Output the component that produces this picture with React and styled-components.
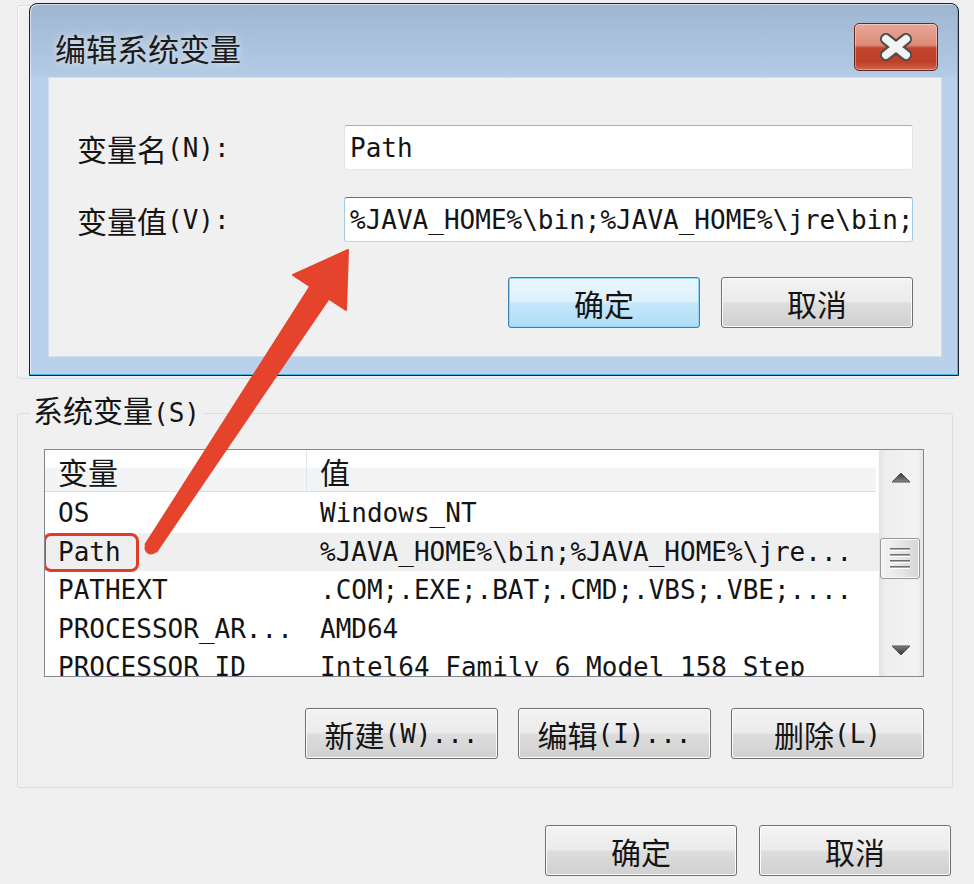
import React from "react";
import styled, { createGlobalStyle } from "styled-components";

const GlobalStyle = createGlobalStyle`
  html, body {
    margin: 0;
    background: #f0f0f0;
  }
  body {
    font-family: "DejaVu Sans Mono", "Noto Sans CJK SC", monospace;
    color: #141414;
  }
  * {
    box-sizing: border-box;
  }
`;

const Page = styled.div`
  position: relative;
  width: 974px;
  height: 884px;
  overflow: hidden;
  padding: 5px 23px 0 17px;
  font-size: 26px;
  line-height: 1;
`;

const Han = styled.span`
  font-family: "Noto Sans CJK SC", sans-serif;
  font-size: 30px;
  line-height: 1;
`;

// CJK runs get the wider CJK font, the rest stays half-width mono
function Mixed({ text }) {
  return text.split(/([\u3400-\u9fff]+)/).map((part, i) => {
    if (!part) return null;
    if (/[\u3400-\u9fff]/.test(part)) return <Han key={i}>{part}</Han>;
    return <span key={i}>{part}</span>;
  });
}

/* ---------- window behind the dialog ---------- */

const Backdrop = styled.div`
  width: 938px;
  height: 374px;
  border: 1px solid #d6dde4;
  border-right: none;
  border-radius: 4px 0 0 4px;
  box-shadow: inset 1px 1px 0 #ffffff;
  padding-left: 11px;
`;

/* ---------- dialog ---------- */

const Dialog = styled.div`
  width: 930px;
  height: 373px;
  margin-top: -3px;
  display: flex;
  flex-direction: column;
  border: 1px solid #17222c;
  border-radius: 8px 8px 0 0;
  background: linear-gradient(#9fb6d0, #b3cbe5 72px, #b9d1ea 74px, #b9d1ea);
  box-shadow: inset -1px -1px 0 #4fb8e2, inset 1px 1px 0 rgba(255, 255, 255, 0.55);
`;

const TitleBar = styled.div`
  height: 73px;
  flex-shrink: 0;
  display: flex;
  align-items: center;
  justify-content: space-between;
  padding: 13px 20px 0 25px;
`;

const Title = styled.div`
  font-family: "Noto Sans CJK SC", sans-serif;
  font-size: 31px;
  color: #1b1b1b;
  text-shadow: 0 0 10px rgba(255, 255, 255, 0.75);
`;

const CloseButton = styled.div`
  width: 84px;
  height: 48px;
  display: flex;
  align-items: center;
  justify-content: center;
  border: 1px solid #5e2b27;
  border-radius: 5px;
  background: linear-gradient(#e9a797, #dc8c79 46%, #c3452d 52%, #be3f28 82%, #d0654a);
  box-shadow: inset 0 0 0 1px rgba(255, 255, 255, 0.35);
`;

const ClientFrame = styled.div`
  flex: 1;
  display: flex;
  padding: 0 16px 18px 18px;
`;

const Client = styled.div`
  flex: 1;
  background: #f0f0f0;
  border: 1px solid #d2deea;
  padding: 47px 28px 28px 28px;
  display: grid;
  grid-template-columns: 267px 1fr;
  grid-auto-rows: 45px;
  row-gap: 27px;
  align-items: center;
`;

const Label = styled.div`
  white-space: nowrap;
  display: flex;
  align-items: center;
`;

const Field = styled.div`
  height: 45px;
  background: #ffffff;
  border: 1px solid;
  border-color: ${(p) =>
    p.$focus ? "#3d7bad #a4c9e3 #b7d9ed #a4c9e3" : "#abadb3 #e2e3ea #e3e9ef #e2e3ea"};
  border-radius: 3px;
  padding-left: 5px;
  display: flex;
  align-items: center;
  overflow: hidden;
  white-space: nowrap;
`;

const DialogButtons = styled.div`
  grid-column: 1 / -1;
  justify-self: end;
  align-self: start;
  margin-top: 8px;
  display: flex;
  gap: 21px;
`;

const Button = styled.button`
  width: ${(p) => p.$w || 192}px;
  height: 51px;
  padding: 0;
  font: inherit;
  color: #141414;
  display: flex;
  align-items: center;
  justify-content: center;
  white-space: nowrap;
  border: 1px solid ${(p) => (p.$default ? "#3c7fb1" : "#707070")};
  border-radius: 3px;
  background: ${(p) =>
    p.$default
      ? "linear-gradient(#ecf7fd, #dcf1fc 48%, #c4e7fb 52%, #b0ddf5)"
      : "linear-gradient(#f3f3f3, #ebebeb 48%, #dddddd 52%, #d0d0d0)"};
  box-shadow: inset 0 0 0 1px ${(p) => (p.$default ? "#8fd6f7" : "#fcfcfc")};
`;

/* ---------- system variables group ---------- */

const Group = styled.fieldset`
  margin: 14px 0 0 0;
  width: 936px;
  min-width: 0;
  padding: 16px 28px 28px 12px;
  border: 1px solid #d5dfe5;
  border-radius: 3px;
`;

const Legend = styled.legend`
  padding: 0 3px;
  line-height: 40px;
`;

const ListBox = styled.div`
  margin-left: 14px;
  width: 880px;
  height: 228px;
  border: 1px solid #828790;
  background: #ffffff;
  display: flex;
`;

const ListBody = styled.div`
  flex: 1;
  overflow: hidden;
  display: flex;
  flex-direction: column;
`;

const HeaderRow = styled.div`
  height: 42px;
  flex-shrink: 0;
  display: flex;
  margin: 0 3px 2px 0;
  border-bottom: 1px solid #dcdfe3;
  background: linear-gradient(#ffffff 0, #ffffff 40%, #f3f4f6 46%, #f3f4f6 100%);
`;

const HeaderCell = styled.div`
  display: flex;
  align-items: center;
  padding-left: 13px;
  width: ${(p) => (p.$w ? `${p.$w}px` : "auto")};
  flex: ${(p) => (p.$w ? "none" : 1)};
  border-right: ${(p) => (p.$w ? "1px solid #e1e6ec" : "none")};
`;

const Row = styled.div`
  height: 38.5px;
  flex-shrink: 0;
  display: flex;
  align-items: center;
  background: ${(p) => (p.$sel ? "#efefef" : "transparent")};
`;

const NameCell = styled.div`
  position: relative;
  width: 262px;
  height: 100%;
  flex: none;
  padding-left: 13px;
  display: flex;
  align-items: center;
  white-space: nowrap;
`;

const ValueCell = styled.div`
  flex: 1;
  padding-left: 13px;
  white-space: nowrap;
`;

const Marker = styled.div`
  position: absolute;
  left: -2px;
  top: 0;
  width: 96px;
  height: 39px;
  border: 3px solid #e23b27;
  border-radius: 8px;
`;

const Scrollbar = styled.div`
  width: 44px;
  flex-shrink: 0;
  display: flex;
  flex-direction: column;
  background: linear-gradient(to right, #e2e2e2, #eeeeee 15%, #f3f3f3 85%, #e6e6e6);
`;

const ScrollArrow = styled.div`
  height: ${(p) => p.$h}px;
  flex-shrink: 0;
  display: flex;
  align-items: center;
  justify-content: center;
`;

const Track = styled.div`
  flex: 1;
`;

const Thumb = styled.div`
  margin: 33px 3px 0 1px;
  height: 41px;
  border: 1px solid #979797;
  border-radius: 3px;
  background: linear-gradient(to right, #f4f4f4, #e6e6e6 50%, #d6d6d6);
  box-shadow: inset 0 0 0 1px #fbfbfb;
  display: flex;
  align-items: center;
  justify-content: center;
`;

const Grip = styled.div`
  width: 20px;
  height: 21px;
  background: repeating-linear-gradient(
    #6f6f6f 0 1px,
    #a9a9a9 1px 2px,
    #ffffff 2px 3px,
    transparent 3px 6px
  );
`;

const GroupButtons = styled.div`
  margin: 31px 0 0 14px;
  display: flex;
  justify-content: flex-end;
  gap: 20px;
`;

const Footer = styled.div`
  margin-top: 37px;
  display: flex;
  justify-content: flex-end;
  gap: 22px;
`;

const Overlay = styled.svg`
  position: absolute;
  left: 0;
  top: 0;
  pointer-events: none;
`;

const rows = [
  ["OS", "Windows_NT"],
  ["Path", "%JAVA_HOME%\\bin;%JAVA_HOME%\\jre..."],
  ["PATHEXT", ".COM;.EXE;.BAT;.CMD;.VBS;.VBE;...."],
  ["PROCESSOR_AR...", "AMD64"],
  ["PROCESSOR_ID", "Intel64 Family 6 Model 158 Step"],
];

function Arrow({ down }) {
  return (
    <svg width="20" height="11" viewBox="0 0 20 11">
      <defs>
        <linearGradient id={down ? "ad" : "au"} x1="0" y1="0" x2="0" y2="1">
          <stop offset="0" stopColor={down ? "#7d7d7d" : "#303030"} />
          <stop offset="1" stopColor={down ? "#303030" : "#8a8a8a"} />
        </linearGradient>
      </defs>
      <polygon
        points={down ? "1,1 19,1 10,10" : "1,10 19,10 10,1"}
        fill={`url(#${down ? "ad" : "au"})`}
        stroke="#555"
        strokeWidth="1"
        strokeLinejoin="round"
      />
    </svg>
  );
}

export default function App() {
  return (
    <>
      <GlobalStyle />
      <Page>
        <Backdrop>
          <Dialog>
            <TitleBar>
              <Title>编辑系统变量</Title>
              <CloseButton>
                <svg width="36" height="30" viewBox="0 0 36 30">
                  <path d="M8 7 L28 23 M28 7 L8 23" stroke="#4d4d4d" strokeWidth="12" strokeLinecap="round" />
                  <path d="M8 7 L28 23 M28 7 L8 23" stroke="#f4f4f4" strokeWidth="8" strokeLinecap="round" />
                </svg>
              </CloseButton>
            </TitleBar>
            <ClientFrame>
              <Client>
                <Label>
                  <Mixed text="变量名(N):" />
                </Label>
                <Field>Path</Field>
                <Label>
                  <Mixed text="变量值(V):" />
                </Label>
                <Field $focus>%JAVA_HOME%\bin;%JAVA_HOME%\jre\bin;%JAVA_HOME%\lib</Field>
                <DialogButtons>
                  <Button $default>
                    <Han>确定</Han>
                  </Button>
                  <Button>
                    <Han>取消</Han>
                  </Button>
                </DialogButtons>
              </Client>
            </ClientFrame>
          </Dialog>
        </Backdrop>

        <Group>
          <Legend>
            <Mixed text="系统变量(S)" />
          </Legend>
          <ListBox>
            <ListBody>
              <HeaderRow>
                <HeaderCell $w={262}>
                  <Han>变量</Han>
                </HeaderCell>
                <HeaderCell>
                  <Han>值</Han>
                </HeaderCell>
              </HeaderRow>
              {rows.map(([name, value]) => (
                <Row key={name} $sel={name === "Path"}>
                  <NameCell>
                    {name}
                    {name === "Path" && <Marker />}
                  </NameCell>
                  <ValueCell>{value}</ValueCell>
                </Row>
              ))}
            </ListBody>
            <Scrollbar>
              <ScrollArrow $h={55}>
                <Arrow />
              </ScrollArrow>
              <Track>
                <Thumb>
                  <Grip />
                </Thumb>
              </Track>
              <ScrollArrow $h={52}>
                <Arrow down />
              </ScrollArrow>
            </Scrollbar>
          </ListBox>
          <GroupButtons>
            <Button $w={193}>
              <Mixed text="新建(W)..." />
            </Button>
            <Button $w={193}>
              <Mixed text="编辑(I)..." />
            </Button>
            <Button $w={193}>
              <Mixed text="删除(L)" />
            </Button>
          </GroupButtons>
        </Group>

        <Footer>
          <Button>
            <Han>确定</Han>
          </Button>
          <Button>
            <Han>取消</Han>
          </Button>
        </Footer>

        <Overlay width="974" height="884" viewBox="0 0 974 884">
          <polygon
            points="145.6,544.4 310.3,286.4 293,275 348,250 346,310 328.7,298.6 156.4,551.6"
            fill="#e5432c"
            stroke="#e5432c"
            strokeWidth="2"
            strokeLinejoin="round"
          />
          <circle cx="151" cy="548" r="6.5" fill="#e5432c" />
        </Overlay>
      </Page>
    </>
  );
}
